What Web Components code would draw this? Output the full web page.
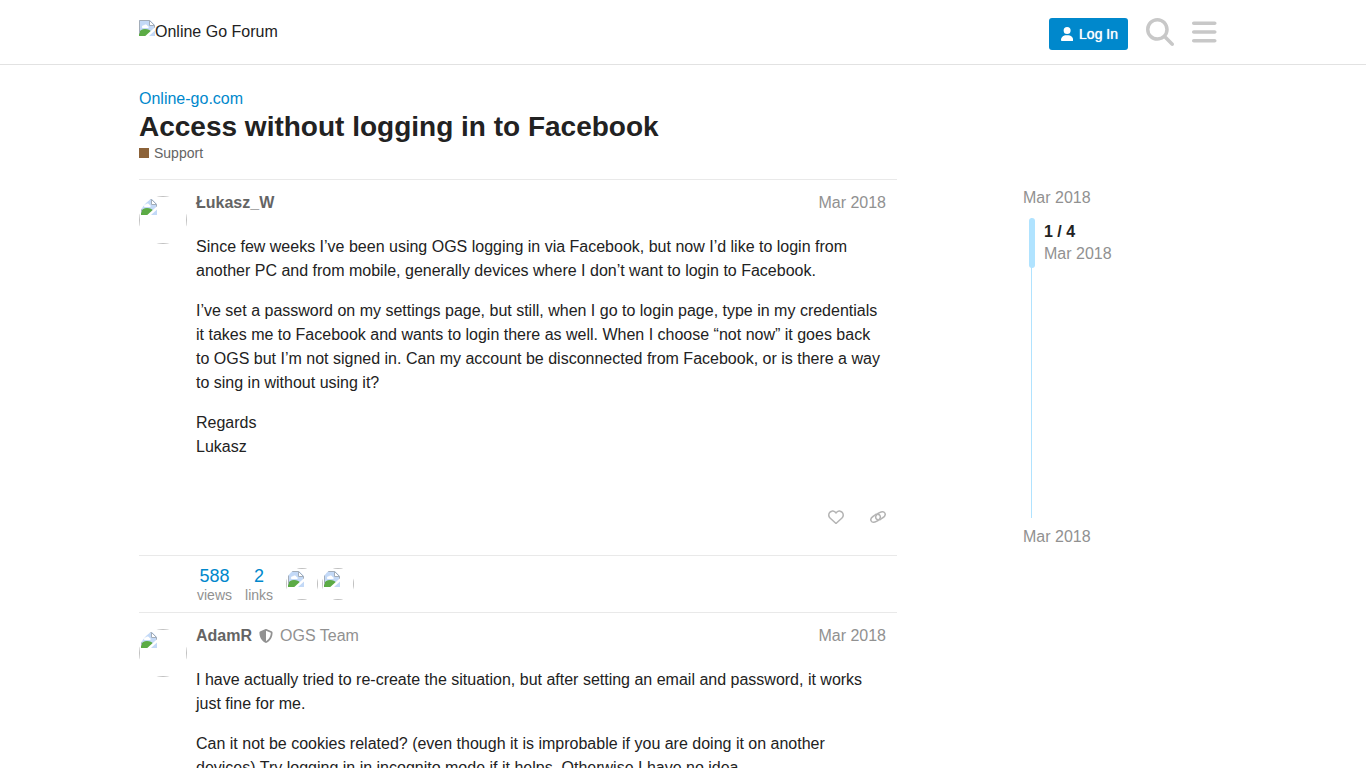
<!DOCTYPE html>
<html lang="en">

<head>
    <meta charset="UTF-8">
    <meta name="viewport" content="width=device-width, initial-scale=1.0">
    <title>Access without logging in to Facebook - Support - Online Go Forum</title>
    <style>
        html {
            --primary: #222;
            --primary-high: #646464;
            --primary-medium: #919191;
            --primary-low: #e9e9e9;
            --icon: #c8c8c8;
            --tertiary: #0088cc;
            --tertiary-low: #b0e3ff;
        }

        body {
            margin: 0;
            background: #fff;
            color: var(--primary);
            font: 16px/24px "Liberation Sans", Arial, sans-serif;
        }

        main {
            display: block;
            max-width: 1088px;
            margin: 0 auto;
            padding: 22px 16px 0;
        }

        .topic {
            display: flex;
            align-items: flex-start;
            justify-content: space-between;
            gap: 24px;
        }

        .posts {
            flex: 0 1 758px;
            min-width: 0;
        }

        p {
            margin: 0 0 16px;
        }
    </style>
</head>

<body>
    <forum-header name="Online Go Forum"></forum-header>

    <main>
        <topic-title category="Support" color="#8c6238">
            <a slot="parent" href="#online-go">Online-go.com</a>
            Access without logging in to Facebook
        </topic-title>

        <div class="topic">
            <div class="posts">
                <topic-post author="Łukasz_W" date="Mar 2018" actions>
                    <p>Since few weeks I’ve been using OGS logging in via Facebook, but now I’d like to login from another PC and from mobile, generally devices where I don’t want to login to Facebook.</p>
                    <p>I’ve set a password on my settings page, but still, when I go to login page, type in my credentials it takes me to Facebook and wants to login there as well. When I choose “not now” it goes back to OGS but I’m not signed in. Can my account be disconnected from Facebook, or is there a way to sing in without using it?</p>
                    <p>Regards<br>Lukasz</p>
                </topic-post>
                <topic-map views="588" links="2"></topic-map>
                <topic-post author="AdamR" group="OGS Team" date="Mar 2018">
                    <p>I have actually tried to re-create the situation, but after setting an email and password, it works just fine for me.</p>
                    <p>Can it not be cookies related? (even though it is improbable if you are doing it on another devices) Try logging in in incognito mode if it helps. Otherwise I have no idea.</p>
                </topic-post>
            </div>
            <topic-timeline start="Mar 2018" position="1 / 4" current="Mar 2018" end="Mar 2018"></topic-timeline>
        </div>
    </main>

    <script>
        // viewBox + markup for each icon
        const ICONS = {
            user: ['0 0 448 512', '<path d="M224 256A128 128 0 1 0 224 0a128 128 0 1 0 0 256zm-45.7 48C79.8 304 0 383.8 0 482.3C0 498.7 13.3 512 29.7 512H418.3c16.4 0 29.7-13.3 29.7-29.7C448 383.8 368.2 304 269.7 304H178.3z"/>'],
            search: ['0 0 512 512', '<path d="M416 208c0 45.9-14.9 88.3-40 122.7L502.6 457.4c12.5 12.5 12.5 32.8 0 45.3s-32.8 12.5-45.3 0L330.7 376c-34.4 25.2-76.8 40-122.7 40C93.1 416 0 322.9 0 208S93.1 0 208 0S416 93.1 416 208zM208 352a144 144 0 1 0 0-288 144 144 0 1 0 0 288z"/>'],
            bars: ['0 0 448 512', '<path d="M0 96C0 78.3 14.3 64 32 64H416c17.7 0 32 14.3 32 32s-14.3 32-32 32H32C14.3 128 0 113.7 0 96zM0 256c0-17.7 14.3-32 32-32H416c17.7 0 32 14.3 32 32s-14.3 32-32 32H32c-17.7 0-32-14.3-32-32zM448 416c0 17.7-14.3 32-32 32H32c-17.7 0-32-14.3-32-32s14.3-32 32-32H416c17.7 0 32 14.3 32 32z"/>'],
            heart: ['0 0 512 512', '<path d="M225.8 468.2l-2.5-2.3L48.1 303.2C17.4 274.7 0 234.7 0 192.8v-3.3c0-70.4 50-130.8 119.2-144C158.6 37.9 198.9 47 231 69.6c9 6.4 17.4 13.8 25 22.3c4.2-4.8 8.7-9.2 13.5-13.3c3.7-3.2 7.5-6.2 11.5-9C313.1 47 353.4 37.9 392.8 45.4C462 58.6 512 119.1 512 189.5v3.3c0 41.9-17.4 81.9-48.1 110.4L288.7 465.9l-2.5 2.3c-8.2 7.6-19 11.9-30.2 11.9s-22-4.2-30.2-11.9zM239.1 145c-.4-.3-.7-.7-1-1.1l-17.8-20c-23.2-26-58.1-37.8-92.1-31.3C81.6 101.5 48 142.1 48 189.5v3.3c0 28.5 11.9 55.8 32.8 75.2L256 430.7 431.2 268c20.9-19.4 32.8-46.7 32.8-75.2v-3.3c0-47.3-33.6-88-80.1-96.9c-34-6.5-69 5.4-92 31.3l-17.8 20c-.3.4-.7.7-1 1.1c-4.5 4.5-10.6 7-16.9 7s-12.4-2.5-16.9-7z"/>'],
            link: ['0 0 16 16', '<g fill="none" stroke="currentColor" stroke-width="1.5" stroke-linecap="round"><path d="M6.2 5.2 3.6 7C1.2 8.4.3 10.4 1.2 12c.9 1.6 3 1.7 5.2.4l1.6-.9c2.2-1.3 2.8-3.6 1.900-5.100-.4-.7-1.100-1-1.900-.9"/><path d="M9.800 10.800 12.400 9c2.400-1.400 3.300-3.400 2.400-5-.9-1.600-3-1.700-5.200-.4L8 4.500C5.800 5.800 5.200 8.100 6.100 9.600c.4.700 1.100 1 1.900.9"/></g>'],
            shield: ['0 0 512 512', '<path d="M256 0c4.6 0 9.2 1 13.4 2.9L457.7 82.8c22 9.3 38.4 31 38.3 57.2c-.5 99.2-41.3 280.7-213.6 363.2c-16.7 8-36.1 8-52.8 0C57.3 420.7 16.5 239.2 16 140c-.1-26.2 16.3-47.9 38.3-57.2L242.7 2.9C246.8 1 251.4 0 256 0zm0 66.8V444.8C394 378 431.1 230.1 432 141.4L256 66.8z"/>'],
            missing: ['0 0 16 16', '<path fill="#c3d9f7" d="M0 0h11l5 5v11H0z"/><path fill="#fff" d="M3 7c0-1 1-2 2-1.5C5.5 4 8 4 8.5 6 10 6 10 8 9 8H4C3.3 8 3 7.500 3 7z"/><path fill="#5cab45" d="M0 16v-3c1-3 3-4 6-4s5 1 6 2.500L8 16z"/><path fill="#fff" stroke="#a3adb9" d="M10.500.5v5h5z"/><path fill="none" stroke="#a3adb9" d="M10.500.5H.5v13M15.500 5.500V9"/><path stroke="#fff" stroke-width="2.500" d="M7 17 17 8"/>']
        };

        class ForumIcon extends HTMLElement {
            constructor() {
                super();
                const [box, shapes] = ICONS[this.getAttribute('name')];
                this.attachShadow({ mode: 'open' }).innerHTML = `
                    <style>
                        :host { display: inline-flex; flex: none; }
                        svg { display: block; height: var(--icon-size, 16px); fill: currentColor; }
                    </style>
                    <svg viewBox="${box}" aria-hidden="true">${shapes}</svg>`;
            }
        }

        // round avatar, shown with the browser's missing image frame
        class UserAvatar extends HTMLElement {
            constructor() {
                super();
                this.attachShadow({ mode: 'open' }).innerHTML = `
                    <style>
                        :host {
                            display: block;
                            flex: none;
                            box-sizing: border-box;
                            width: var(--avatar-size, 48px);
                            height: var(--avatar-size, 48px);
                            border: 1px solid #c0c0c0;
                            padding: 1px;
                            clip-path: circle(50%);
                        }
                    </style>
                    <forum-icon name="missing"></forum-icon>`;
            }
        }

        class ForumHeader extends HTMLElement {
            constructor() {
                super();
                this.attachShadow({ mode: 'open' }).innerHTML = `
                    <style>
                        :host { display: block; border-bottom: 1px solid #e2e2e2; }
                        header {
                            display: flex;
                            align-items: center;
                            max-width: 1088px;
                            height: 64px;
                            margin: 0 auto;
                            padding: 0 16px;
                        }
                        .logo {
                            display: flex;
                            color: var(--primary);
                            text-decoration: none;
                            margin-right: auto;
                        }
                        button {
                            font: inherit;
                            border: 0;
                            background: none;
                            padding: 0;
                            cursor: pointer;
                        }
                        .login {
                            display: flex;
                            align-items: center;
                            gap: 6px;
                            height: 32px;
                            margin: 4px 9px 0 0;
                            padding: 0 10px 0 12px;
                            border-radius: 3px;
                            background: var(--tertiary);
                            color: #fff;
                            font-size: 14px;
                            text-shadow: 0 0 1px #fff;
                            --icon-size: 14px;
                        }
                        .icon {
                            display: flex;
                            align-items: center;
                            justify-content: center;
                            width: 45px;
                            height: 46px;
                            color: var(--icon);
                            --icon-size: 28px;
                        }
                    </style>
                    <header>
                        <a class="logo" href="#home"><forum-icon name="missing"></forum-icon><span>${this.getAttribute('name')}</span></a>
                        <button class="login"><forum-icon name="user"></forum-icon><span>Log In</span></button>
                        <button class="icon" aria-label="Search"><forum-icon name="search"></forum-icon></button>
                        <button class="icon" aria-label="Menu"><forum-icon name="bars"></forum-icon></button>
                    </header>`;
            }
        }

        class TopicTitle extends HTMLElement {
            constructor() {
                super();
                this.attachShadow({ mode: 'open' }).innerHTML = `
                    <style>
                        :host { display: block; padding-bottom: 12px; }
                        ::slotted(a) { color: var(--tertiary); text-decoration: none; }
                        h1 { margin: 0; font-size: 28px; line-height: 32px; }
                        .category {
                            display: inline-flex;
                            align-items: center;
                            gap: 5px;
                            color: var(--primary-high);
                            font-size: 14px;
                            line-height: 20px;
                            text-decoration: none;
                            vertical-align: top;
                        }
                        .badge { width: 10px; height: 10px; background: ${this.getAttribute('color')}; }
                    </style>
                    <slot name="parent"></slot>
                    <h1><slot></slot></h1>
                    <a class="category" href="#category"><span class="badge"></span>${this.getAttribute('category')}</a>`;
            }
        }

        class TopicPost extends HTMLElement {
            constructor() {
                super();
                const group = this.getAttribute('group');
                this.attachShadow({ mode: 'open' }).innerHTML = `
                    <style>
                        :host { display: block; border-top: 1px solid var(--primary-low); }
                        article { display: flex; gap: 9px; padding: 11px 11px 0 0; }
                        user-avatar { margin-top: 5px; }
                        .body { flex: 1; min-width: 0; }
                        .meta {
                            display: flex;
                            align-items: center;
                            gap: 7px;
                            margin-bottom: 20px;
                            color: var(--primary-medium);
                            --icon-size: 14px;
                        }
                        a { color: inherit; text-decoration: none; }
                        .name { color: var(--primary-high); font-weight: bold; }
                        .date { margin-left: auto; }
                        nav {
                            display: flex;
                            justify-content: flex-end;
                            margin-right: -13px;
                            padding: 23px 0 20px;
                            color: #b4b4b4;
                            --icon-size: 16px;
                        }
                        button {
                            display: flex;
                            align-items: center;
                            justify-content: center;
                            width: 42px;
                            height: 37px;
                            padding: 0;
                            border: 0;
                            background: none;
                            color: inherit;
                        }
                    </style>
                    <article>
                        <user-avatar></user-avatar>
                        <div class="body">
                            <div class="meta">
                                <a class="name" href="#user">${this.getAttribute('author')}</a>
                                ${group ? `<forum-icon name="shield"></forum-icon><a href="#group">${group}</a>` : ''}
                                <a class="date" href="#post">${this.getAttribute('date')}</a>
                            </div>
                            <slot></slot>
                            ${this.hasAttribute('actions') ? `
                            <nav>
                                <button aria-label="Like this post"><forum-icon name="heart"></forum-icon></button>
                                <button aria-label="Share a link to this post"><forum-icon name="link"></forum-icon></button>
                            </nav>` : ''}
                        </div>
                    </article>`;
            }
        }

        class TopicMap extends HTMLElement {
            constructor() {
                super();
                this.attachShadow({ mode: 'open' }).innerHTML = `
                    <style>
                        :host {
                            display: flex;
                            align-items: center;
                            height: 56px;
                            padding-left: 58px;
                            border-top: 1px solid var(--primary-low);
                            --avatar-size: 32px;
                        }
                        .stat {
                            display: flex;
                            flex-direction: column;
                            align-items: center;
                            margin-right: 13px;
                            padding-top: 2px;
                            color: var(--primary-medium);
                            font-size: 14px;
                            line-height: 18px;
                        }
                        .number { color: var(--tertiary); font-size: 18px; line-height: 20px; }
                        user-avatar { margin-right: 4px; }
                    </style>
                    <div class="stat"><span class="number">${this.getAttribute('views')}</span>views</div>
                    <div class="stat"><span class="number">${this.getAttribute('links')}</span>links</div>
                    <user-avatar></user-avatar>
                    <user-avatar></user-avatar>`;
            }
        }

        class TopicTimeline extends HTMLElement {
            constructor() {
                super();
                this.attachShadow({ mode: 'open' }).innerHTML = `
                    <style>
                        :host {
                            display: block;
                            flex: 0 0 204px;
                            padding-top: 7px;
                            color: var(--primary-medium);
                        }
                        a { display: block; color: inherit; text-decoration: none; }
                        .track {
                            display: flex;
                            height: 300px;
                            margin: 8px 0 7px 6px;
                            background: linear-gradient(var(--tertiary-low), var(--tertiary-low)) 2px 0 / 1px 100% no-repeat;
                        }
                        .handle {
                            width: 6px;
                            height: 50px;
                            border-radius: 3px;
                            background: var(--tertiary-low);
                        }
                        .current { padding: 3px 0 0 9px; line-height: 22px; }
                        .current b { display: block; color: var(--primary); }
                    </style>
                    <a href="#first">${this.getAttribute('start')}</a>
                    <div class="track">
                        <div class="handle"></div>
                        <div class="current"><b>${this.getAttribute('position')}</b>${this.getAttribute('current')}</div>
                    </div>
                    <a href="#last">${this.getAttribute('end')}</a>`;
            }
        }

        customElements.define('forum-icon', ForumIcon);
        customElements.define('user-avatar', UserAvatar);
        customElements.define('forum-header', ForumHeader);
        customElements.define('topic-title', TopicTitle);
        customElements.define('topic-post', TopicPost);
        customElements.define('topic-map', TopicMap);
        customElements.define('topic-timeline', TopicTimeline);
    </script>
</body>

</html>
